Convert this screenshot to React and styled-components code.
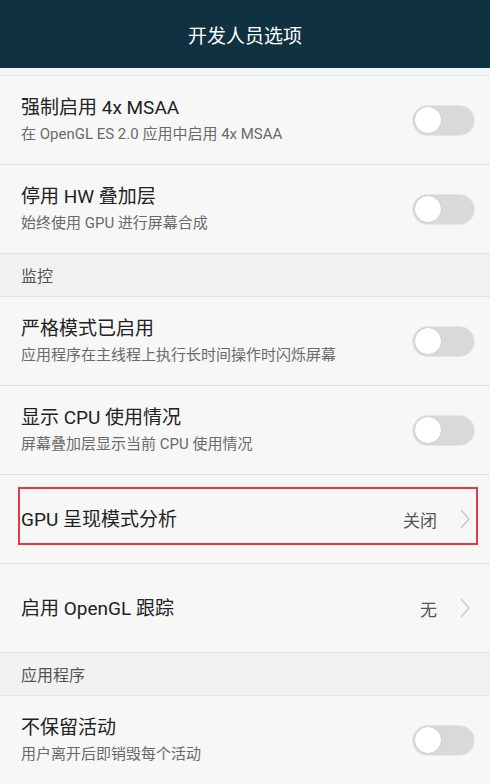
import React from 'react';
import styled, { createGlobalStyle } from 'styled-components';

const GlobalStyle = createGlobalStyle`
    html, body {
        margin: 0;
        padding: 0;
        background: #f7f7f7;
    }
    body {
        font-family: "Roboto", "Noto Sans CJK SC", sans-serif;
    }
`;

const Page = styled.div`
    width: 490px;
    height: 784px;
    overflow: hidden;
    background: #f7f7f7;
`;

const Header = styled.header`
    height: 68px;
    display: flex;
    align-items: center;
    justify-content: center;
    background: #10313f;
    color: #ffffff;
    font-size: 19px;
`;

const Shade = styled.div`
    height: 7px;
    background: linear-gradient(#eef5f7, #f4f6f7);
    border-bottom: 1px solid #e6e6e6;
`;

const Row = styled.div`
    position: relative;
    height: 89px;
    box-sizing: border-box;
    display: flex;
    align-items: center;
    padding: 0 15px 0 21px;
    border-bottom: 1px solid #e2e2e2;
    background: #f7f7f7;
`;

const Texts = styled.div`
    flex: 1;
    display: flex;
    flex-direction: column;
    gap: 6px;
`;

const Title = styled.div`
    font-size: 19px;
    color: #222222;
    line-height: 23px;
`;

const Sub = styled.div`
    font-size: 15px;
    color: #6a6a6a;
    line-height: 19px;
`;

const Track = styled.div`
    width: 63px;
    height: 31px;
    box-sizing: border-box;
    border-radius: 16px;
    background: #d9d9d9;
    border: 1px solid #e6e6e6;
    display: flex;
    align-items: center;
    padding-left: 2px;
`;

const Knob = styled.div`
    width: 26px;
    height: 26px;
    border-radius: 50%;
    background: #ffffff;
    box-shadow: 0 0 1px rgba(0, 0, 0, 0.25);
`;

const Value = styled.div`
    font-size: 17px;
    color: #555555;
    margin-right: 22px;
`;

const Highlight = styled.div`
    position: absolute;
    left: 18px;
    right: 12px;
    top: 12px;
    bottom: 18px;
    border: 2px solid #e23b45;
    pointer-events: none;
`;

const Section = styled.div`
    height: 43px;
    box-sizing: border-box;
    display: flex;
    align-items: center;
    padding-left: 21px;
    background: #f1f1f1;
    border-bottom: 1px solid #e2e2e2;
    font-size: 16px;
    color: #555555;
`;

const Toggle = () => (
    <Track>
        <Knob />
    </Track>
);

const Chevron = () => (
    <svg width="12" height="22" viewBox="0 0 12 22" style={{ marginRight: 4 }}>
        <path d="M2 2 L10 11 L2 20" fill="none" stroke="#c8c8c8" strokeWidth="1.4" />
    </svg>
);

const SwitchRow = ({ title, sub }) => (
    <Row>
        <Texts>
            <Title>{title}</Title>
            <Sub>{sub}</Sub>
        </Texts>
        <Toggle />
    </Row>
);

const LinkRow = ({ title, value, marked }) => (
    <Row>
        <Texts>
            <Title>{title}</Title>
        </Texts>
        <Value>{value}</Value>
        <Chevron />
        {marked && <Highlight />}
    </Row>
);

const App = () => {
    return (
        <Page>
            <GlobalStyle />
            <Header>开发人员选项</Header>
            <Shade />
            <SwitchRow title="强制启用 4x MSAA" sub="在 OpenGL ES 2.0 应用中启用 4x MSAA" />
            <SwitchRow title="停用 HW 叠加层" sub="始终使用 GPU 进行屏幕合成" />
            <Section>监控</Section>
            <SwitchRow title="严格模式已启用" sub="应用程序在主线程上执行长时间操作时闪烁屏幕" />
            <SwitchRow title="显示 CPU 使用情况" sub="屏幕叠加层显示当前 CPU 使用情况" />
            <LinkRow title="GPU 呈现模式分析" value="关闭" marked />
            <LinkRow title="启用 OpenGL 跟踪" value="无" />
            <Section>应用程序</Section>
            <SwitchRow title="不保留活动" sub="用户离开后即销毁每个活动" />
        </Page>
    );
};

export default App;
